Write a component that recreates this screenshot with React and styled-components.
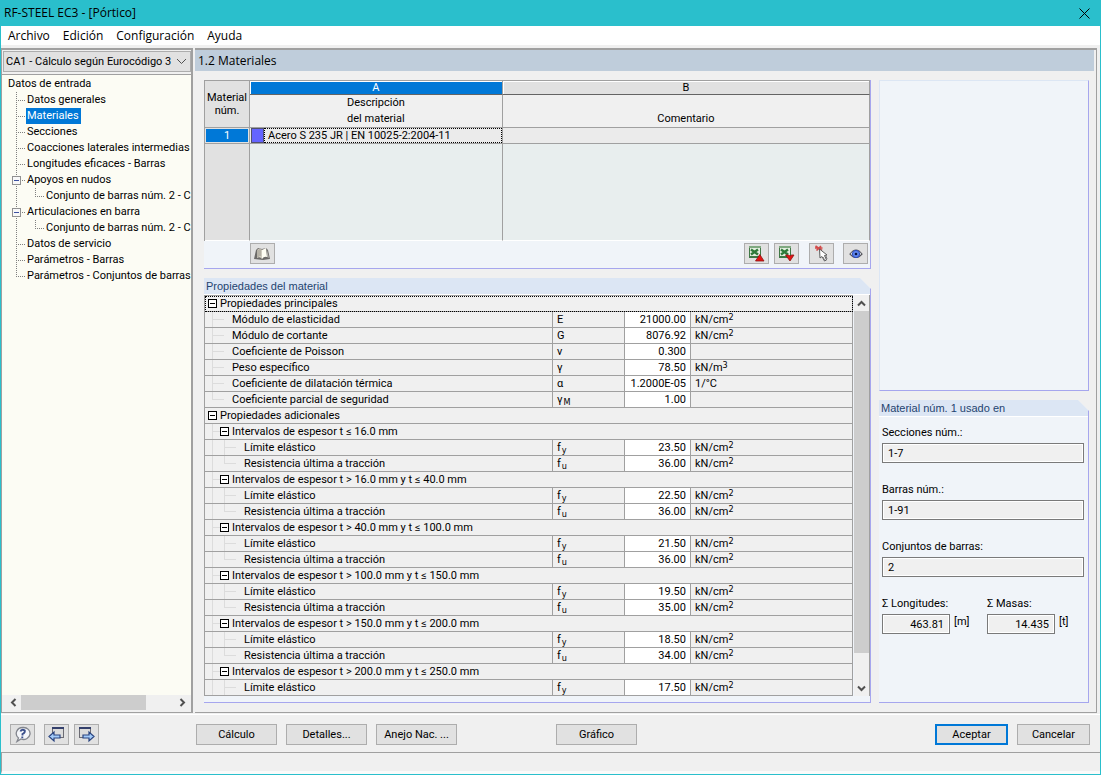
import React from 'react'
import styled, { createGlobalStyle, css } from 'styled-components'

const ui = 'Roboto, "Open Sans", sans-serif'
const segoe = '"Open Sans", "Noto Sans", sans-serif'
const arial = '"Liberation Sans", Arial, sans-serif'

const GlobalStyle = createGlobalStyle`
  * {
    box-sizing: border-box;
  }
  body {
    margin: 0;
    background: #f0f0f0;
    color: #000;
    font: 11px/16px ${ui};
  }
  button, input, select {
    font: inherit;
    color: inherit;
  }
`

const Window = styled.div`
  display: flex;
  flex-direction: column;
  min-height: 100vh;
  border: 1px solid #2abfcc;
  border-top: 0;
  background: #f0f0f0;
`

const TitleBar = styled.header`
  display: flex;
  align-items: center;
  justify-content: space-between;
  height: 26px;
  padding: 0 10px 0 3px;
  background: #2abfcc;
  font-family: ${segoe};
  font-size: 12px;
`

const CloseButton = styled.button`
  display: flex;
  padding: 0;
  border: 0;
  background: none;
`

const MenuBar = styled.nav`
  display: flex;
  gap: 13px;
  height: 19px;
  padding: 0 7px;
  margin-bottom: 3px;
  background: #fff;
  font-family: ${segoe};
  font-size: 12px;
  line-height: 20px;

  a {
    color: inherit;
    text-decoration: none;
  }
`

const Body = styled.div`
  display: grid;
  grid-template-columns: 192px minmax(0, 1fr);
  gap: 2px;
  flex: 1;
  padding-right: 3px;
`

const Sidebar = styled.aside`
  display: flex;
  flex-direction: column;
  min-width: 0;
  border: 1px solid #a0a0a0;
  border-top-width: 2px;
  border-right-width: 2px;
  background: #f0f0f0;
`

const CaseBox = styled.div`
  display: grid;
  align-items: center;
  margin: 1px 0 2px 1px;
  border: 1px solid #adadad;
  background: #e1e1e1;

  > * {
    grid-area: 1 / 1;
  }
  > svg {
    justify-self: end;
    margin-right: 3px;
    pointer-events: none;
  }
`

const CaseSelect = styled.select`
  width: 100%;
  height: 19px;
  padding: 0 0 0 2px;
  border: 0;
  background: none;
  appearance: none;
`

const Tree = styled.ul`
  flex: 1;
  margin: 0;
  padding: 1px 0 0 1px;
  border-top: 1px solid #a0a0a0;
  background: #fcfcf4;
  list-style: none;
  overflow: hidden;
`

const TreeItem = styled.li`
  display: flex;
  height: 16px;
  white-space: nowrap;

  a {
    padding: 0 2px 0 1px;
    background: ${p => (p.$selected ? '#0078d7' : 'none')};
    color: ${p => (p.$selected ? '#fff' : '#000')};
    text-decoration: none;
  }
  svg {
    flex: none;
  }
`

const TreeRoot = styled(TreeItem)`
  padding-left: 4px;
`

const HScroll = styled.div`
  display: flex;
  align-items: center;
  height: 15px;
  margin-bottom: 2px;
  padding: 0 1px 0 3px;
`

const VScroll = styled.div`
  display: flex;
  flex-direction: column;
  align-items: center;
  width: 16px;
  border-right: 1px solid #a0a0a0;
  background: #f0f0f0;
`

const ScrollButton = styled.button`
  display: flex;
  align-items: center;
  justify-content: center;
  flex: none;
  width: 16px;
  height: 16px;
  padding: 0;
  border: 0;
  background: none;
`

const ScrollThumb = styled.div`
  flex: ${p => p.$grow};
  align-self: stretch;
  background: #cdcdcd;
`

const ScrollGap = styled.div`
  flex: ${p => p.$grow};
`

const Main = styled.main`
  display: flex;
  flex-direction: column;
  min-width: 0;
  border: solid #a0a0a0;
  border-width: 2px 1px 1px 0;
`

const PageTitle = styled.h1`
  height: 21px;
  margin: 0 2px 0 0;
  padding: 0 3px;
  background: #bfcddb;
  font: 12px/22px ${segoe};
`

const Content = styled.div`
  display: grid;
  grid-template-columns: minmax(0, 1fr) 210px;
  gap: 8px;
  flex: 1;
  padding: 9px 7px 9px 9px;
`

const Column = styled.div`
  display: flex;
  flex-direction: column;
  gap: 9px;
  min-width: 0;
`

const Panel = styled.section`
  border: 1px solid #dce6f4;
  border-right-color: #a6a6ee;
  border-bottom-color: #a6a6ee;
  background: #f0f4f9;
`

const GridPanel = styled(Panel)`
  border-top: 0;
  border-left: 0;
`

const PreviewPanel = styled(Panel)`
  height: 311px;
`

const Group = styled(Panel)`
  display: flex;
  flex-direction: column;
  flex: 1;
  border-top: 0;
  border-left: 0;
  clip-path: polygon(0 0, calc(100% - 11px) 0, 100% 11px, 100% 100%, 0 100%);
`

const GroupTitle = styled.h2`
  height: 16px;
  margin: 0;
  padding: 0 2px;
  border-bottom: 0;
  background: #dce6f4;
  color: #1f4470;
  font: 11px/17px ${arial};
`

const MaterialTable = styled.table`
  width: 100%;
  table-layout: fixed;
  border-spacing: 0;
  border-top: 1px solid #a0a0a0;
  border-left: 1px solid #a0a0a0;

  th, td {
    padding: 0;
    font-weight: normal;
    border-right: 1px solid #a0a0a0;
    border-bottom: 1px solid #a0a0a0;
  }
`

const Corner = styled.th`
  background: #e1e1e1;
  line-height: 13px;
`

const Letter = styled.th`
  height: 14px;
  border-bottom-color: #646464 !important;
  background: ${p => (p.$active ? '#0078d7' : '#e1e1e1')};
  color: ${p => (p.$active ? '#fff' : '#000')};
  line-height: 13px;
  box-shadow: inset 1px 1px #fff;
`

const ColumnTitle = styled.th`
  height: 33px;
  background: #f0f0f0;
  vertical-align: bottom;
`

const RowNumber = styled.th`
  height: 16px;
  background: #0078d7;
  color: #fff;
  line-height: 14px;
  box-shadow: inset 0 0 0 1px #e1e1e1;
`

const MaterialCell = styled.td`
  background: #ebebeb;
  line-height: 15px;

  > div {
    display: flex;
    height: 15px;
  }
  span {
    flex: 1;
    padding-left: 3px;
    border: 1px dotted #000;
    line-height: 14px;
  }
  i {
    width: 13px;
    margin: 0 0 0 1px;
    border: 1px solid #50506e;
    background: #6464ff;
  }
`

const EmptyCell = styled.td`
  height: 97px;
  background: ${p => (p.$head ? '#e1e1e1' : '#e8eeee')};
  border-bottom-color: #fff !important;
`

const GridTools = styled.div`
  display: flex;
  padding: 2px 2px 4px 46px;
`

const button = css`
  display: flex;
  align-items: center;
  justify-content: center;
  height: 21px;
  padding: 0;
  border: 1px solid #adadad;
  background: #e1e1e1;
`

const IconButton = styled.button`
  ${button}
  width: 25px;
`

const IconGroup = styled.div`
  display: flex;
  gap: ${p => p.$gap}px;
  margin-left: ${p => (p.$push ? 'auto' : '10px')};
`

const PushButton = styled.button`
  ${button}
  min-width: ${p => p.$width}px;
  border: ${p => (p.$primary ? '2px solid #0078d7' : '1px solid #adadad')};
`

const PropertyArea = styled.div`
  display: flex;
  flex: 1;
  gap: 1px;
  padding-bottom: 6px;
  border-top: 1px solid #fff;
`

const PropertyTable = styled.table`
  flex: 1;
  min-width: 0;
  table-layout: fixed;
  border-spacing: 0;
  border-top: 1px solid #a0a0a0;
  border-left: 1px solid #a0a0a0;
  background: #f0f0f0;
  line-height: 15px;
`

const Cell = styled.td`
  height: 16px;
  padding: 0 4px;
  border-right: 1px solid #a0a0a0;
  border-bottom: 1px solid #a0a0a0;
  background: ${p => (p.$value ? '#fff' : '#f0f0f0')};
  text-align: ${p => (p.$value ? 'right' : 'left')};
  white-space: nowrap;

  sup, sub {
    font: 9px/9px "DejaVu Sans Condensed", "DejaVu Sans", sans-serif;
  }
  sup {
    vertical-align: 3px;
  }
  sub {
    margin-left: 1px;
    vertical-align: -2px;
  }
`

const NameCell = styled(Cell)`
  padding: 0 0 0 2px;
  outline: ${p => (p.$focus ? '1px dotted #000' : 'none')};
  outline-offset: -1px;

  > div {
    display: flex;
    height: 15px;
  }
  svg {
    flex: none;
  }
`

const UsedIn = styled.form`
  display: flex;
  flex-direction: column;
  gap: 19px;
  padding: 8px 4px 8px 3px;
  border-top: 1px solid #fff;
`

const Field = styled.label`
  display: flex;
  flex-direction: column;
  gap: 2px;
`

const Sums = styled.div`
  display: flex;
  gap: 16px;
`

const WithUnit = styled.span`
  display: flex;
  gap: 4px;
  min-width: 89px;
`

const ReadOnly = styled.input`
  width: ${p => (p.$short ? '68px' : '100%')};
  height: 20px;
  padding: 0 5px;
  border: 1px solid #7a7a7a;
  background: #f0f0f0;
  box-shadow: inset 0 0 0 1px #fff;
  text-align: ${p => (p.$short ? 'right' : 'left')};
`

const Footer = styled.footer`
  display: grid;
  grid-template-columns: 185px 1fr auto;
  align-items: center;
  height: 38px;
  margin-top: 1px;
  padding: 2px 10px 0 9px;
  border-top: 1px solid #fff;
`

const Actions = styled.div`
  display: grid;
  grid-template-columns: repeat(5, 81px);
  gap: 9px;
  padding-left: 1px;

  > :last-child {
    grid-column: 5;
  }
`

const StatusBar = styled.div`
  height: 22px;
  border-top: 1px solid #a0a0a0;
  border-left: 1px solid #a0a0a0;
  border-bottom: 3px solid #fafafa;
`

const Row = styled.div`
  display: flex;
  gap: ${p => p.$gap}px;
`

const tree = [
  { text: 'Datos generales' },
  { text: 'Materiales', selected: true },
  { text: 'Secciones' },
  { text: 'Coacciones laterales intermedias' },
  { text: 'Longitudes eficaces - Barras' },
  { text: 'Apoyos en nudos', box: true },
  { text: 'Conjunto de barras núm. 2 - C', child: true },
  { text: 'Articulaciones en barra', box: true },
  { text: 'Conjunto de barras núm. 2 - C', child: true },
  { text: 'Datos de servicio' },
  { text: 'Parámetros - Barras' },
  { text: 'Parámetros - Conjuntos de barras', last: true },
]

const kNcm2 = <>kN/cm<sup>2</sup></>
const fy = <>f<sub>y</sub></>
const fu = <>f<sub>u</sub></>

const main = [
  ['Módulo de elasticidad', 'E', '21000.00', kNcm2],
  ['Módulo de cortante', 'G', '8076.92', kNcm2],
  ['Coeficiente de Poisson', 'ν', '0.300', ''],
  ['Peso específico', 'γ', '78.50', <>kN/m<sup>3</sup></>],
  ['Coeficiente de dilatación térmica', 'α', '1.2000E-05', '1/°C'],
  ['Coeficiente parcial de seguridad', <>γ<sub>M</sub></>, '1.00', ''],
]

const ranges = [
  ['t ≤ 16.0 mm', '23.50', '36.00'],
  ['t > 16.0 mm y t ≤ 40.0 mm', '22.50', '36.00'],
  ['t > 40.0 mm y t ≤ 100.0 mm', '21.50', '36.00'],
  ['t > 100.0 mm y t ≤ 150.0 mm', '19.50', '35.00'],
  ['t > 150.0 mm y t ≤ 200.0 mm', '18.50', '34.00'],
  ['t > 200.0 mm y t ≤ 250.0 mm', '17.50'],
]

function TreeGuide({ box, child, last }) {
  return (
    <svg width={child ? 42 : 23} height="16" stroke="#808080" fill="none" shapeRendering="crispEdges">
      <path d={last ? 'M13.5 0V8' : 'M13.5 0V16'} strokeDasharray="1 1" />
      {child
        ? <path d="M32.5 0V8.5H42" strokeDasharray="1 1" />
        : <path d="M13 8.5H23" strokeDasharray="1 1" />}
      {box && <rect x="9.5" y="4.5" width="8" height="8" fill="#f8f8f8" stroke="#919191" />}
      {box && <path d="M11 8.5H16" stroke="#3c50a0" />}
    </svg>
  )
}

// level is the depth of the row, each level is 12px wide
function PropertyGuide({ level, box, last, end }) {
  const x = 12 * (level - 1) + 5.5
  const bx = 12 * level + 1.5
  return (
    <svg width={12 * (level + 1) + 1} height="15" fill="none" stroke="#dcdcdc" shapeRendering="crispEdges">
      {level === 2 && !end && <path d="M5.5 0V15" />}
      {level > 0 && <path d={last ? `M${x} 0V7.5H${x + 11}` : `M${x} 0V15M${x} 7.5H${x + 11}`} />}
      {box && <rect x={bx} y="3.5" width="8" height="8" fill="#fff" stroke="#000" />}
      {box && <path d={`M${bx + 1.5} 7.5H${bx + 6.5}`} stroke="#000" />}
    </svg>
  )
}

function Arrow({ turn }) {
  return (
    <svg width="9" height="9" viewBox="0 0 9 9" fill="none" stroke="#505050" strokeWidth="2">
      <path d="M1 6.5L4.5 3L8 6.5" transform={`rotate(${turn} 4.5 4.5)`} />
    </svg>
  )
}

function BookIcon() {
  return (
    <svg width="17" height="14" viewBox="0 0 17 14">
      <path d="M0 12L2 3L4 1L8 2L12 1L14 3L16 12L9 13Z" fill="#6c6a68" />
      <path d="M3 3Q6 0 8 3V12Q6 9 3 11Z" fill="#d0ccc0" />
      <path d="M4 3V10M6 2V9" stroke="#9c988c" />
      <path d="M8 3L12 1L13 10Q10 9 8 12Z" fill="#fffef4" />
      <path d="M13 3L15 11L13 10Z" fill="#b4b2ac" />
    </svg>
  )
}

function ExcelIcon({ down }) {
  return (
    <svg width="17" height="17" viewBox="0 0 17 17">
      <rect x="1" y="1" width="12" height="12" fill="#3f7846" />
      <rect x="2" y="3" width="10" height="8" fill="#e2eedf" />
      <path d="M1 1H13V3H1Z" fill="#7fa880" />
      <path d="M3 4.5L10 9.500M10 4.5L3 9.500" stroke="#2f7a3a" strokeWidth="2.400" />
      {down
        ? <path d="M7.500 10H10.500L12 11L13.500 10H16L12 16Z" fill="#e41414" stroke="#8c1414" strokeWidth=".8" />
        : <path d="M7.500 16L11.800 9.500L16 16Z" fill="#e41414" stroke="#8c1414" strokeWidth=".8" />}
    </svg>
  )
}

function PickIcon() {
  return (
    <svg width="15" height="17" viewBox="0 0 15 17">
      <path d="M1.500 1L8 5.500M7 1L2.500 5.500M1 3H8.500" stroke="#d24a4a" strokeWidth="1.600" />
      <path d="M5.500 4L6 13L8 11.500L10.500 16L12.500 15L10.500 10.500L13 10Z" fill="#fff" stroke="#5a5a5a" />
      <path d="M9 12L11 16M12 11L13 14" stroke="#77777a" />
    </svg>
  )
}

function EyeIcon() {
  return (
    <svg width="14" height="12" viewBox="0 0 14 12">
      <path d="M1 6Q7 -2 13 6Q7 13 1 6Z" fill="#e8ecf4" stroke="#55555c" strokeWidth="1.200" />
      <circle cx="7" cy="6" r="3.600" fill="#5f86ec" stroke="#2a4ac0" />
      <circle cx="7" cy="6" r="1.300" fill="#0a1440" />
    </svg>
  )
}

function HelpIcon() {
  return (
    <svg width="17" height="17" viewBox="0 0 17 17">
      <path d="M9 1.500A6.500 6 0 1 1 7 13L3 15.500L4.500 12A6.500 6 0 0 1 9 1.500Z" fill="#f4f6fa" stroke="#83868e" strokeWidth="1.300" />
      <path d="M6.500 5.500Q7 3.500 9 3.700Q11.500 4 10.700 6Q10 7.300 8.500 8V9.500M8.300 10.500V12.200" fill="none" stroke="#3a4f8c" strokeWidth="1.900" />
    </svg>
  )
}

function WindowArrowIcon({ right }) {
  return (
    <svg width="17" height="17" viewBox="0 0 17 17">
      <rect x={right ? 1.5 : 4.5} y="1.500" width="11" height="10" fill="#dcdcdc" stroke="#6c6c74" />
      <rect x={right ? 1 : 4} y="1" width="12" height="2" fill="#34406c" />
      <path
        d="M1 10.500L6 6V9H12V12H6V15Z"
        transform={right ? 'translate(17 0) scale(-1 1)' : undefined}
        fill="#a4ccfa"
        stroke="#2a4480"
        strokeWidth="1.200"
      />
    </svg>
  )
}

function PropertyRow({ row, level, last, end }) {
  const [name, symbol, value, unit] = row
  return (
    <tr>
      <NameCell>
        <div>
          <PropertyGuide level={level} last={last} end={end} />
          {name}
        </div>
      </NameCell>
      <Cell>{symbol}</Cell>
      <Cell $value>{value}</Cell>
      <Cell>{unit}</Cell>
    </tr>
  )
}

function GroupRow({ level, focus, last, children }) {
  return (
    <tr>
      <NameCell colSpan={4} $focus={focus}>
        <div>
          <PropertyGuide level={level} box last={last} />
          {children}
        </div>
      </NameCell>
    </tr>
  )
}

function Navigator() {
  return (
    <Sidebar>
      <CaseBox>
        <CaseSelect aria-label="Caso">
          <option>CA1 - Cálculo según Eurocódigo 3</option>
        </CaseSelect>
        <svg width="11" height="7" viewBox="0 0 11 7" fill="none" stroke="#505050">
          <path d="M1 1L5.500 5.500L10 1" />
        </svg>
      </CaseBox>
      <Tree>
        <TreeRoot><a href="#">Datos de entrada</a></TreeRoot>
        {tree.map((item, i) => (
          <TreeItem key={i} $selected={item.selected}>
            <TreeGuide {...item} />
            <a href="#">{item.text}</a>
          </TreeItem>
        ))}
      </Tree>
      <HScroll>
        <ScrollButton aria-label="Izquierda"><Arrow turn={-90} /></ScrollButton>
        <ScrollThumb $grow={125} />
        <ScrollGap $grow={28} />
        <ScrollButton aria-label="Derecha"><Arrow turn={90} /></ScrollButton>
      </HScroll>
    </Sidebar>
  )
}

function Materials() {
  return (
    <GridPanel>
      <MaterialTable>
        <colgroup>
          <col style={{ width: 45 }} />
          <col style={{ width: '38%' }} />
          <col />
        </colgroup>
        <thead>
          <tr>
            <Corner rowSpan={2}>Material<br />núm.</Corner>
            <Letter $active>A</Letter>
            <Letter>B</Letter>
          </tr>
          <tr>
            <ColumnTitle>Descripción<br />del material</ColumnTitle>
            <ColumnTitle>Comentario</ColumnTitle>
          </tr>
        </thead>
        <tbody>
          <tr>
            <RowNumber>1</RowNumber>
            <MaterialCell>
              <div><i /><span>Acero S 235 JR | EN 10025-2:2004-11</span></div>
            </MaterialCell>
            <MaterialCell />
          </tr>
          <tr>
            <EmptyCell $head />
            <EmptyCell />
            <EmptyCell />
          </tr>
        </tbody>
      </MaterialTable>
      <GridTools>
        <IconButton aria-label="Biblioteca"><BookIcon /></IconButton>
        <IconGroup $gap={5} $push>
          <IconButton aria-label="Exportar"><ExcelIcon /></IconButton>
          <IconButton aria-label="Importar"><ExcelIcon down /></IconButton>
        </IconGroup>
        <IconGroup $gap={9}>
          <IconButton aria-label="Seleccionar"><PickIcon /></IconButton>
          <IconButton aria-label="Ver"><EyeIcon /></IconButton>
        </IconGroup>
      </GridTools>
    </GridPanel>
  )
}

function Properties() {
  return (
    <Group>
      <GroupTitle>Propiedades del material</GroupTitle>
      <PropertyArea>
        <PropertyTable>
          <colgroup>
            <col />
            <col style={{ width: 72 }} />
            <col style={{ width: 66 }} />
            <col style={{ width: '25%' }} />
          </colgroup>
          <tbody>
            <GroupRow level={0} focus>Propiedades principales</GroupRow>
            {main.map((row, i) => (
              <PropertyRow key={i} row={row} level={1} last={i === main.length - 1} />
            ))}
            <GroupRow level={0}>Propiedades adicionales</GroupRow>
            {ranges.map(([range, yieldStress, ultimate]) => (
              <React.Fragment key={range}>
                <GroupRow level={1}>Intervalos de espesor {range}</GroupRow>
                <PropertyRow row={['Límite elástico', fy, yieldStress, kNcm2]} level={2} />
                {ultimate && (
                  <PropertyRow row={['Resistencia última a tracción', fu, ultimate, kNcm2]} level={2} last />
                )}
              </React.Fragment>
            ))}
          </tbody>
        </PropertyTable>
        <VScroll>
          <ScrollButton aria-label="Arriba"><Arrow turn={0} /></ScrollButton>
          <ScrollThumb $grow={340} />
          <ScrollGap $grow={27} />
          <ScrollButton aria-label="Abajo"><Arrow turn={180} /></ScrollButton>
        </VScroll>
      </PropertyArea>
    </Group>
  )
}

function Usage() {
  return (
    <Group>
      <GroupTitle>Material núm. 1 usado en</GroupTitle>
      <UsedIn>
        <Field>Secciones núm.:<ReadOnly readOnly value="1-7" /></Field>
        <Field>Barras núm.:<ReadOnly readOnly value="1-91" /></Field>
        <Field>Conjuntos de barras:<ReadOnly readOnly value="2" /></Field>
        <Sums>
          <Field>
            Σ Longitudes:
            <WithUnit><ReadOnly $short readOnly value="463.81" />[m]</WithUnit>
          </Field>
          <Field>
            Σ Masas:
            <WithUnit><ReadOnly $short readOnly value="14.435" />[t]</WithUnit>
          </Field>
        </Sums>
      </UsedIn>
    </Group>
  )
}

function App() {
  return (
    <Window>
      <GlobalStyle />
      <TitleBar>
        RF-STEEL EC3 - [Pórtico]
        <CloseButton aria-label="Cerrar">
          <svg width="11" height="11" viewBox="0 0 11 11" stroke="#000"><path d="M.5 .5L10.500 10.500M10.500 .5L.5 10.500" /></svg>
        </CloseButton>
      </TitleBar>
      <MenuBar>
        <a href="#">Archivo</a>
        <a href="#">Edición</a>
        <a href="#">Configuración</a>
        <a href="#">Ayuda</a>
      </MenuBar>
      <Body>
        <Navigator />
        <Main>
          <PageTitle>1.2 Materiales</PageTitle>
          <Content>
            <Column>
              <Materials />
              <Properties />
            </Column>
            <Column>
              <PreviewPanel />
              <Usage />
            </Column>
          </Content>
        </Main>
      </Body>
      <Footer>
        <Row $gap={9}>
          <IconButton aria-label="Ayuda"><HelpIcon /></IconButton>
          <Row $gap={5}>
            <IconButton aria-label="Anterior"><WindowArrowIcon /></IconButton>
            <IconButton aria-label="Siguiente"><WindowArrowIcon right /></IconButton>
          </Row>
        </Row>
        <Actions>
          <PushButton>Cálculo</PushButton>
          <PushButton>Detalles...</PushButton>
          <PushButton>Anejo Nac. ...</PushButton>
          <PushButton>Gráfico</PushButton>
        </Actions>
        <Row $gap={9}>
          <PushButton $width={73} $primary>Aceptar</PushButton>
          <PushButton $width={73}>Cancelar</PushButton>
        </Row>
      </Footer>
      <StatusBar />
    </Window>
  )
}

export default App
